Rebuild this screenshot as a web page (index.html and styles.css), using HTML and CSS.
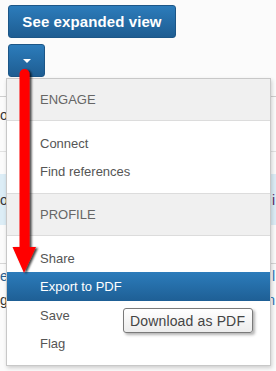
FILE: index.html
```html
<!DOCTYPE html>
<html>
<head>
<meta charset="utf-8">
<link rel="stylesheet" href="styles.css">
</head>
<body>
<div class="page">
  <div class="actions">
    <button class="btn btn-wide">See expanded view</button>
    <button class="btn btn-toggle"><span class="caret"></span></button>
  </div>
  <div class="content">
    <div class="row row-head"><span>oc</span><span></span></div>
    <div class="row row-plain"><span></span><span></span></div>
    <div class="row row-active"><span>o</span><span>i</span></div>
    <div class="row row-gap"><span></span><span></span></div>
    <div class="row row-text"><span class="ink">e</span><span class="link">l</span></div>
    <div class="row row-text"><span>gr</span><span class="link">n</span></div>
  </div>

  <div class="menu">
    <div class="menu-header">ENGAGE</div>
    <ul class="menu-list">
      <li>Connect</li>
      <li>Find references</li>
    </ul>
    <div class="menu-header">PROFILE</div>
    <ul class="menu-list">
      <li>Share</li>
      <li class="active">Export to PDF</li>
      <li>Save</li>
      <li>Flag</li>
    </ul>
  </div>

  <div class="tooltip">Download as PDF</div>

  <svg class="arrow" width="40" height="220" viewBox="0 0 40 220">
    <defs>
      <filter id="sh" x="-50%" y="-10%" width="200%" height="120%">
        <feDropShadow dx="2" dy="1" stdDeviation="1.2" flood-color="#000" flood-opacity="0.75"/>
      </filter>
    </defs>
    <g filter="url(#sh)">
      <path d="M10.5 8 A5 5 0 0 1 20.5 8 L20.5 181 L27 181 L15 207 L3.5 181 L10.5 181 Z" fill="#ff0000"/>
    </g>
  </svg>
</div>
</body>
</html>
```
FILE: styles.css
```css
* { box-sizing: border-box; }
html, body { margin: 0; padding: 0; }
body {
  background: #fbfbfb;
  font-family: "Liberation Sans", Arial, sans-serif;
  width: 276px;
  height: 371px;
  overflow: hidden;
}
.page {
  position: relative;
  width: 276px;
  height: 371px;
}
.actions {
  padding: 5px 0 0 8px;
  display: flex;
  flex-direction: column;
  align-items: flex-start;
  gap: 6px;
}
.btn {
  font-family: "Liberation Sans", Arial, sans-serif;
  color: #fff;
  border: 1px solid #1c5687;
  border-radius: 3px;
  background: linear-gradient(#2c7cbb, #1e5d92);
  height: 33px;
  padding: 0;
  margin: 0;
  display: flex;
  align-items: center;
  justify-content: center;
}
.btn-wide {
  width: 168px;
  font-size: 15px;
  font-weight: bold;
  letter-spacing: 0.1px;
}
.btn-toggle { width: 37px; }
.caret {
  width: 0; height: 0;
  border-left: 4px solid transparent;
  border-right: 4px solid transparent;
  border-top: 4px solid #fff;
  margin-top: 1px;
}
.content {
  font-size: 14px;
  color: #333;
}
.row {
  display: flex;
  justify-content: space-between;
  align-items: center;
  padding: 0 1px 0 0;
}
.row-head {
  height: 56px;
  border-top: 1px solid #cfcfcf;
  margin-top: 19px;
  align-items: flex-start;
  padding-top: 10px;
  border-bottom: 1px solid #e2e2e2;
}
.row-plain { height: 22px; }
.row-active {
  height: 51px;
  background: #dcedf6;
}
.row-active span:last-child { color: #5a2a6a; }
.row-gap {
  height: 39px;
  border-bottom: 1px solid #d6d6d6;
}
.row-text { height: 24px; }
.ink { color: #2a5f8f; }
.link { color: #2a75b8; }

.menu {
  position: absolute;
  left: 6px;
  top: 78px;
  width: 265px;
  background: #fff;
  border: 1px solid #c8c8c8;
  box-shadow: 1px 2px 4px rgba(0,0,0,0.18);
}
.menu-header {
  height: 42px;
  background: #f0f0f0;
  border-bottom: 1px solid #dcdcdc;
  color: #666;
  font-size: 13px;
  padding-left: 33px;
  display: flex;
  align-items: center;
}
.menu-list + .menu-header { border-top: 1px solid #dcdcdc; height: 43px; }
.menu-list {
  list-style: none;
  margin: 0;
  padding: 8px 0;
}
.menu-list li {
  height: 28px;
  padding-left: 33px;
  display: flex;
  align-items: center;
  font-size: 13px;
  color: #555;
}
.menu-list li.active {
  height: 29px;
  color: #fff;
  background: linear-gradient(#2c7cbb, #1e5f95);
}

.tooltip {
  position: absolute;
  left: 123px;
  top: 308px;
  width: 130px;
  height: 25px;
  padding-left: 6px;
  display: flex;
  align-items: center;
  font-size: 14px;
  letter-spacing: 0.15px;
  color: #444;
  background: linear-gradient(#ffffff, #ececec);
  border: 1px solid #7a7a7a;
  border-radius: 3px;
  box-shadow: 2px 2px 3px rgba(0,0,0,0.3);
}
.arrow {
  position: absolute;
  left: 9px;
  top: 66px;
}
```
